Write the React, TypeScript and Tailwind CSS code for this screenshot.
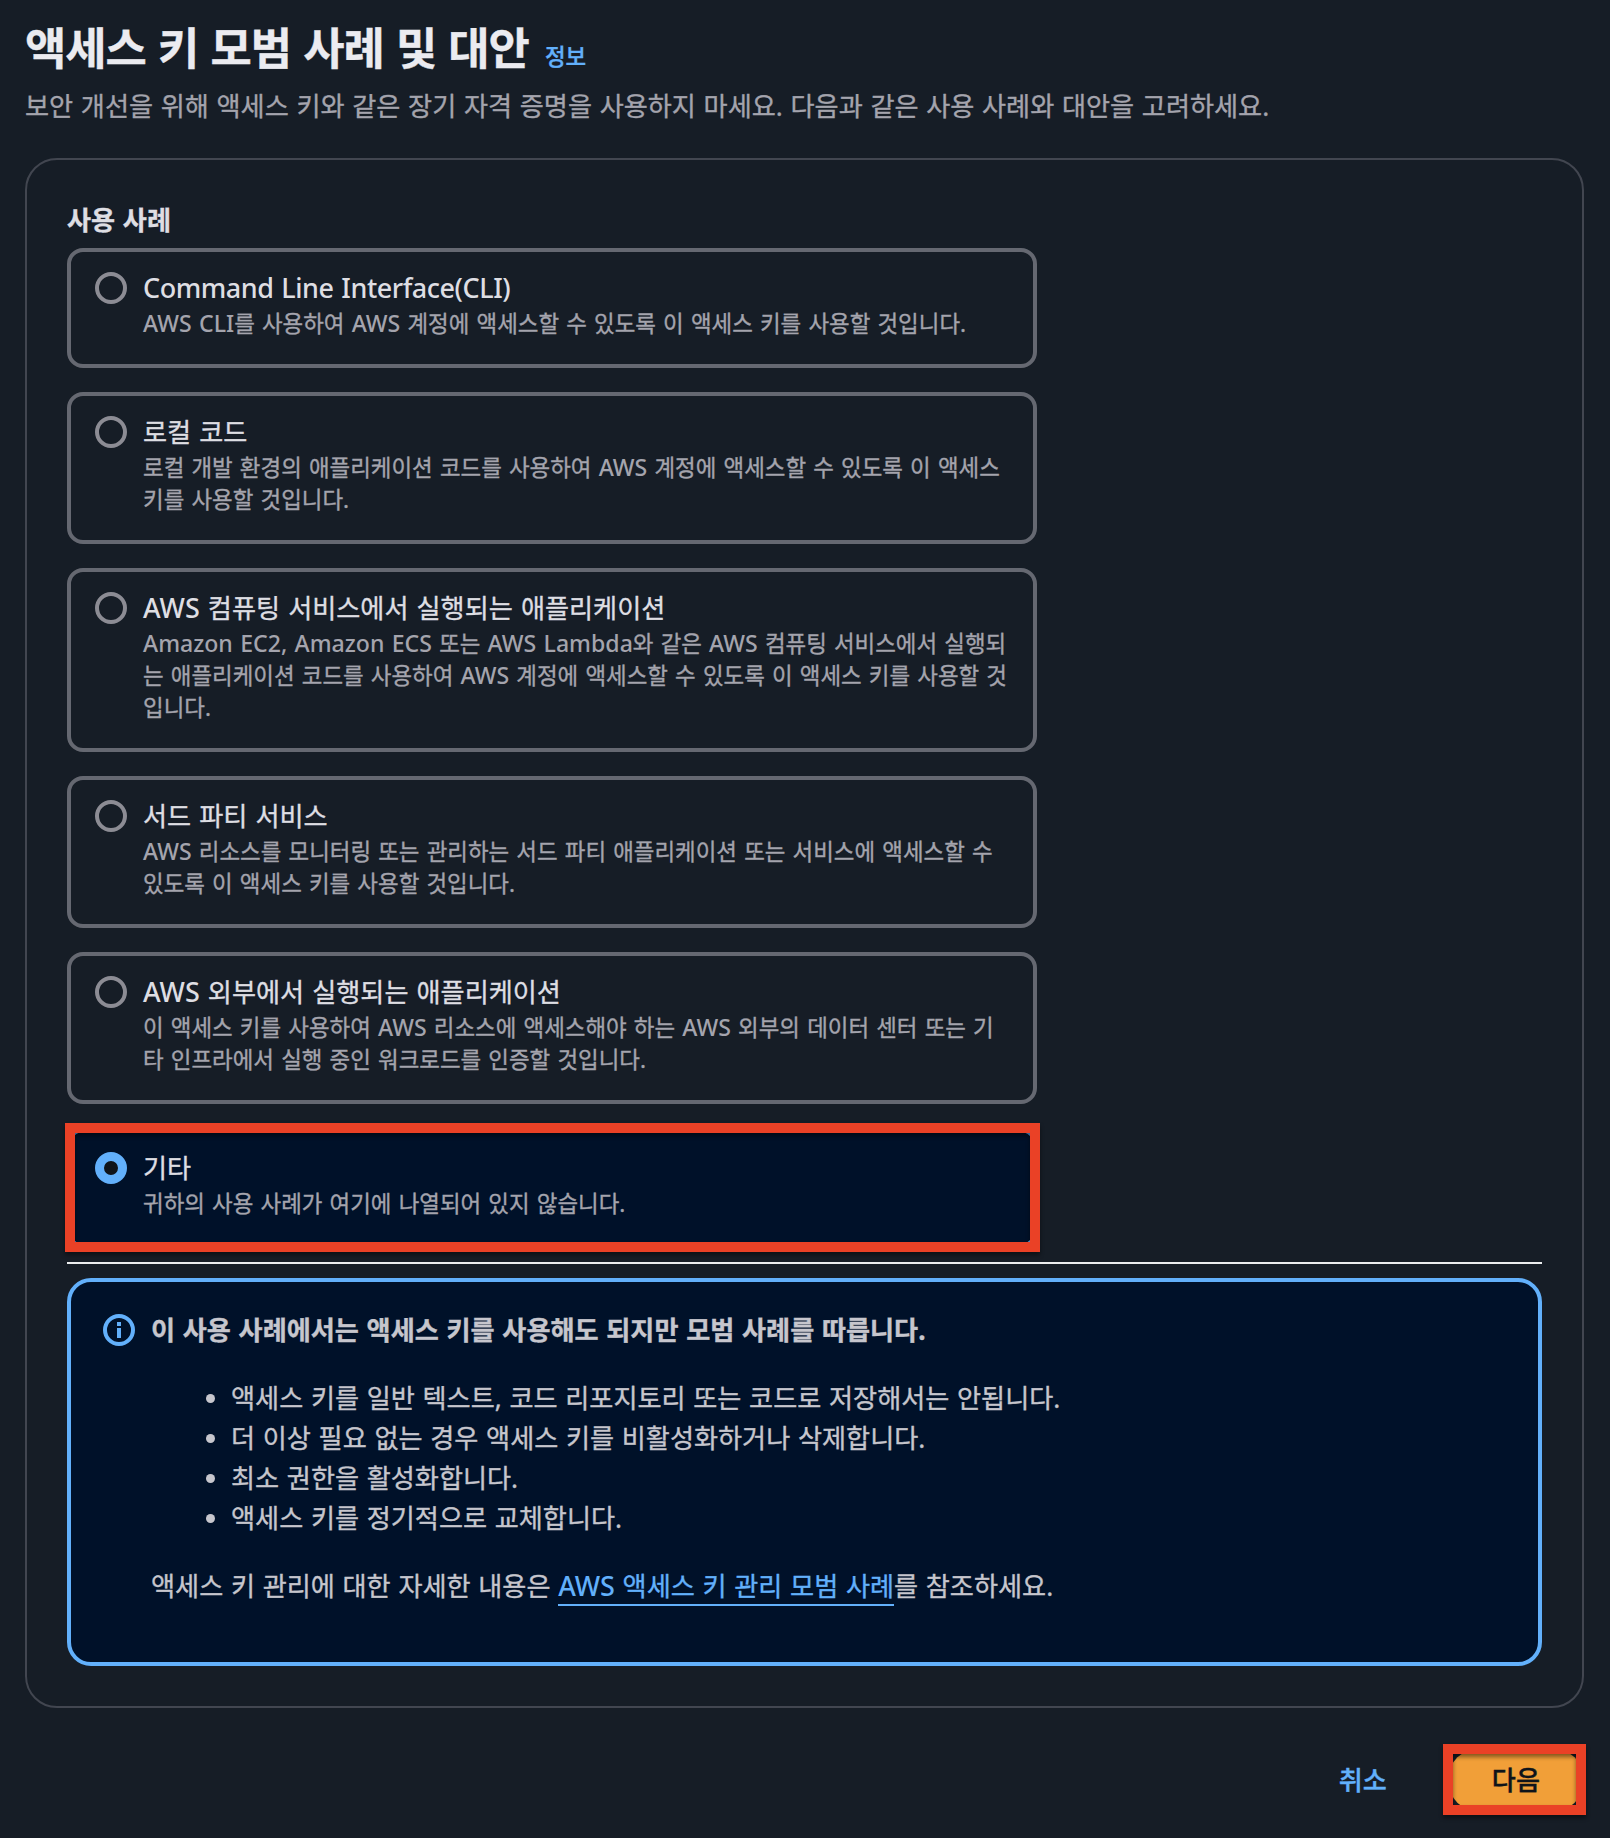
interface UseCase {
  title: string
  titleClass?: string
  description: string[]
  selected?: boolean
}

const useCases: UseCase[] = [
  {
    title: 'Command Line Interface(CLI)',
    titleClass: 'tracking-[-0.45px]',
    description: ['AWS CLI를 사용하여 AWS 계정에 액세스할 수 있도록 이 액세스 키를 사용할 것입니다.'],
  },
  {
    title: '로컬 코드',
    description: [
      '로컬 개발 환경의 애플리케이션 코드를 사용하여 AWS 계정에 액세스할 수 있도록 이 액세스',
      '키를 사용할 것입니다.',
    ],
  },
  {
    title: 'AWS 컴퓨팅 서비스에서 실행되는 애플리케이션',
    description: [
      'Amazon EC2, Amazon ECS 또는 AWS Lambda와 같은 AWS 컴퓨팅 서비스에서 실행되',
      '는 애플리케이션 코드를 사용하여 AWS 계정에 액세스할 수 있도록 이 액세스 키를 사용할 것',
      '입니다.',
    ],
  },
  {
    title: '서드 파티 서비스',
    description: [
      'AWS 리소스를 모니터링 또는 관리하는 서드 파티 애플리케이션 또는 서비스에 액세스할 수',
      '있도록 이 액세스 키를 사용할 것입니다.',
    ],
  },
  {
    title: 'AWS 외부에서 실행되는 애플리케이션',
    description: [
      '이 액세스 키를 사용하여 AWS 리소스에 액세스해야 하는 AWS 외부의 데이터 센터 또는 기',
      '타 인프라에서 실행 중인 워크로드를 인증할 것입니다.',
    ],
  },
  {
    title: '기타',
    description: ['귀하의 사용 사례가 여기에 나열되어 있지 않습니다.'],
    selected: true,
  },
]

const bestPractices = [
  '액세스 키를 일반 텍스트, 코드 리포지토리 또는 코드로 저장해서는 안됩니다.',
  '더 이상 필요 없는 경우 액세스 키를 비활성화하거나 삭제합니다.',
  '최소 권한을 활성화합니다.',
  '액세스 키를 정기적으로 교체합니다.',
]

// Latin words sit slightly larger and heavier than the Korean around them
const MixedText = ({ text }: { text: string }) => (
  <>
    {text.split(/([A-Za-z][A-Za-z0-9 ,()]*[A-Za-z0-9)])/).map((part, i) =>
      i % 2 ? (
        <span key={i} className="text-[1.03em] leading-none font-medium [-webkit-text-stroke:0]">
          {part}
        </span>
      ) : (
        part
      ),
    )}
  </>
)

const Radio = ({ selected }: { selected?: boolean }) => (
  <span
    className={`mt-1 h-8 w-8 shrink-0 rounded-full ${
      selected ? 'border-[9.5px] border-[#62b0fb] bg-[#0f141a]' : 'border-4 border-[#8c8c94]'
    }`}
  />
)

const UseCaseTile = ({ title, titleClass = '', description, selected }: UseCase) => (
  <div
    className={`relative flex gap-4 rounded-2xl border-4 px-6 pt-4 pb-6 ${
      selected ? 'border-[#62b0fb] bg-[#001129]' : 'border-[#656871]'
    }`}
  >
    <Radio selected={selected} />
    <div className="whitespace-nowrap">
      <div className={`text-[#dedee3] [word-spacing:1.3px] ${titleClass}`}>
        <MixedText text={title} />
      </div>
      {description.map((line) => (
        <div key={line} className="text-[22.43px] leading-8 text-[#a4a4ad] [word-spacing:1.35px]">
          <MixedText text={line} />
        </div>
      ))}
    </div>
    {selected && (
      <div className="absolute -top-[9px] -right-[7px] -bottom-2 -left-1.5 border-10 border-[#ea4126] drop-shadow-[0_3px_2px_rgba(0,0,0,0.45)]" />
    )}
  </div>
)

const InfoIcon = () => (
  <svg className="mt-1 h-8 w-8 shrink-0" viewBox="0 0 32 32" fill="none">
    <circle cx="16" cy="16" r="14" stroke="#62b0fb" strokeWidth="4" />
    <path d="M16 14v10M16 8v4" stroke="#62b0fb" strokeWidth="4" />
  </svg>
)

const InfoAlert = () => (
  <div className="flex gap-4 rounded-3xl border-4 border-[#62b0fb] bg-[#001129] px-8 pt-7 pb-14 text-[#c6c6cd]">
    <InfoIcon />
    <div className="flex flex-col gap-7">
      <div className="font-bold">이 사용 사례에서는 액세스 키를 사용해도 되지만 모범 사례를 따릅니다.</div>
      <ul>
        {bestPractices.map((item) => (
          <li key={item} className="flex items-center">
            <span className="mr-4 ml-[55px] h-[9px] w-[9px] rounded-full bg-[#c6c6cd]" />
            {item}
          </li>
        ))}
      </ul>
      <p>
        액세스 키 관리에 대한 자세한 내용은{' '}
        <a className="border-b-2 border-[#62b0fb] -mb-px text-[#62b0fb]">
          <MixedText text="AWS 액세스 키 관리 모범 사례" />
        </a>
        를 참조하세요.
      </p>
    </div>
  </div>
)

const Footer = () => (
  <div className="mt-10 flex justify-end gap-[17px] font-medium">
    <button className="px-11 text-[#62b0fb]">취소</button>
    <div className="relative">
      <button className="h-16 rounded-full bg-[#f19f38] px-11 text-[#0f141a]">다음</button>
      <div className="absolute -top-1 -right-0.5 -bottom-[3px] -left-[5px] border-10 border-[#ea4126] drop-shadow-[0_3px_2px_rgba(0,0,0,0.45)]" />
    </div>
  </div>
)

const App = () => {
  return (
    <div className="h-[1838px] w-[1610px] bg-[#161d26] pt-[18px] pr-[26px] pl-[25px] font-['Noto_Sans','Noto_Sans_CJK_KR',sans-serif] text-[26.17px] leading-10 [-webkit-text-stroke:0.35px] [word-spacing:0.9px]">
      <div className="flex h-[60px] items-baseline gap-4">
        <h1 className="text-[44.87px] leading-[60px] font-bold tracking-[-0.96px] text-[#ebebf0] [word-spacing:1.4px]">
          액세스 키 모범 사례 및 대안
        </h1>
        <a className="text-[22.43px] font-medium text-[#62b0fb]">정보</a>
      </div>
      <p className="mt-2 text-[#a4a4ad]">
        보안 개선을 위해 액세스 키와 같은 장기 자격 증명을 사용하지 마세요. 다음과 같은 사용 사례와 대안을 고려하세요.
      </p>

      <div className="mt-8 rounded-[32px] border-2 border-[#424650] p-10">
        <div className="font-bold text-[#dedee3]">사용 사례</div>
        <div className="mt-2 flex w-[970px] flex-col gap-6">
          {useCases.map((useCase) => (
            <UseCaseTile key={useCase.title} {...useCase} />
          ))}
        </div>
        <hr className="my-3.5 border-t-2 border-[#ebedee]" />
        <InfoAlert />
      </div>

      <Footer />
    </div>
  )
}

export default App
